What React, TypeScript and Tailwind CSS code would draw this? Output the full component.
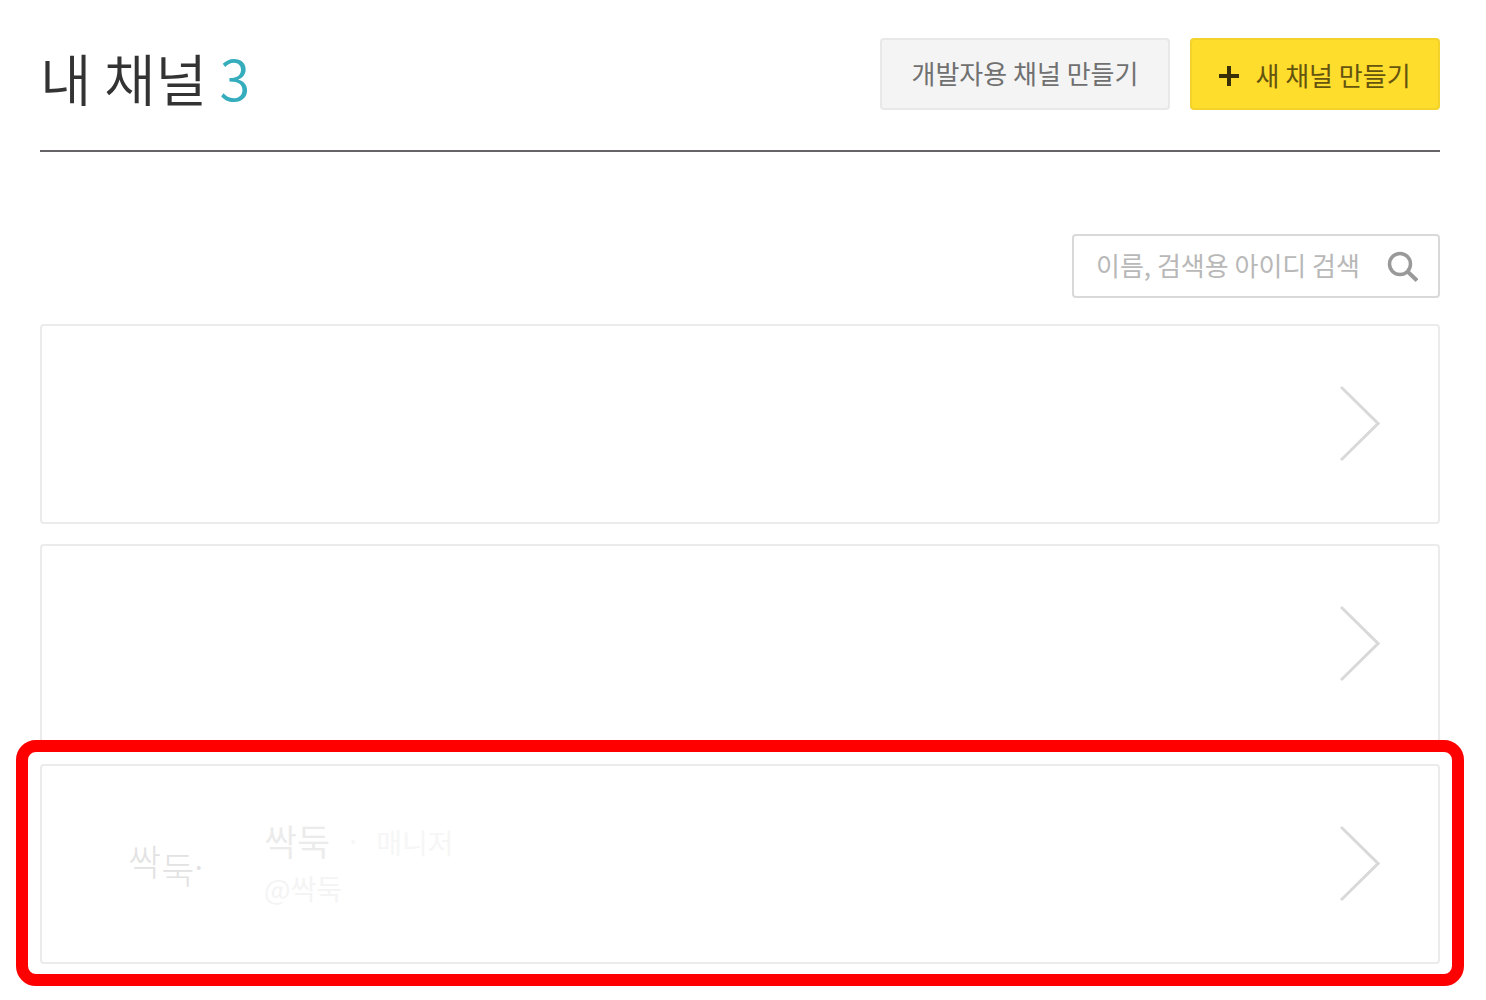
type Channel = {
  id: string
  name?: string
  role?: string
  handle?: string
  highlighted?: boolean
}

const channels: Channel[] = [
  { id: 'first' },
  { id: 'second' },
  { id: 'third', name: '싹둑', role: '매니저', handle: '@싹둑', highlighted: true },
]

function PlusIcon() {
  return (
    <svg className="mt-1 h-5 w-5 shrink-0" viewBox="0 0 20 20" aria-hidden="true">
      <path d="M8 0h4v8h8v4h-8v8H8v-8H0V8h8z" fill="#3a3008" />
    </svg>
  )
}

function SearchIcon() {
  return (
    <svg className="h-8 w-8" viewBox="0 0 32 32" fill="none" stroke="#999999" aria-hidden="true">
      <circle cx="14" cy="14" r="10.500" strokeWidth="3.500" />
      <path d="M21.500 21.500L31 30.500" strokeWidth="4" />
    </svg>
  )
}

function ChevronIcon() {
  return (
    <svg className="h-20 w-10 shrink-0" viewBox="0 0 40 80" fill="none" aria-hidden="true">
      <path d="M1 3L38 39.500L1 76" stroke="#d9d9d9" strokeWidth="3" />
    </svg>
  )
}

function ChannelCard({ channel }: { channel: Channel }) {
  return (
    <li className="relative">
      <a
        href={`#${channel.id}`}
        aria-label={channel.name ? undefined : '채널'}
        className="flex h-50 items-center justify-between rounded-sm border-2 border-[#ebebeb] bg-white pr-14.5"
      >
        {channel.name ? (
          <div className="flex items-center pl-21.5">
            <div className="flex w-34 items-start text-4xl leading-9 font-light text-[#e2e2e2]" aria-hidden="true">
              <span>싹</span>
              <span className="pt-2">둑</span>
              <span className="leading-6">.</span>
            </div>
            <div>
              <div className="flex items-center">
                <strong className="text-4xl leading-12 font-[350] text-[#ebebeb]">{channel.name}</strong>
                <span className="w-11.5 text-center text-[28px] leading-11 text-[#f7f7f7]">·</span>
                <span className="pt-1 text-[28px] leading-11 text-[#f6f6f6]">{channel.role}</span>
              </div>
              <p className="text-[28px] leading-12 text-[#f4f4f4]">{channel.handle}</p>
            </div>
          </div>
        ) : (
          <span />
        )}
        <ChevronIcon />
      </a>
      {channel.highlighted && (
        <span className="pointer-events-none absolute -inset-x-6 -top-6 -bottom-5.5 rounded-[20px] border-12 border-[#ff0000]" />
      )}
    </li>
  )
}

export default function App() {
  return (
    <main className="bg-white pt-9.5 pr-11.5 pb-9 pl-10 font-['Noto_Sans_CJK_KR',sans-serif] font-normal">
      <header className="flex items-start justify-between border-b-2 border-[#666466] pb-9.5">
        <h1 className="pt-1 text-[56px] leading-[70px] font-[350] text-[#333333]">
          내 채널 <span className="text-[#35adbd]">3</span>
        </h1>
        <div className="flex gap-5">
          <button
            type="button"
            className="h-18 w-72.5 rounded-sm border-2 border-[#e8e8e8] bg-[#f4f4f4] pb-1 text-[26px] font-normal text-[#707070]"
          >
            개발자용 채널 만들기
          </button>
          <button
            type="button"
            className="flex h-18 w-62.5 items-center justify-center gap-4 rounded-sm border-2 border-[#f2d32c] bg-[#ffdd2d] text-[26px] font-normal text-[#65540e]"
          >
            <PlusIcon />
            새 채널 만들기
          </button>
        </div>
      </header>

      <form className="mt-20.5 flex justify-end" role="search" onSubmit={(event) => event.preventDefault()}>
        <div className="flex h-16 w-92 items-center rounded-sm border-2 border-[#d9d9d9] bg-white pr-5 pl-5.5">
          <input
            type="text"
            aria-label="이름, 검색용 아이디 검색"
            placeholder="이름, 검색용 아이디 검색"
            className="min-w-0 flex-1 bg-transparent pb-1 text-[26px] font-normal text-[#333333] outline-none placeholder:text-[#b8b8b8]"
          />
          <button type="submit" aria-label="검색" className="ml-4 shrink-0">
            <SearchIcon />
          </button>
        </div>
      </form>

      <ul className="mt-6.5 flex flex-col gap-5">
        {channels.map((channel) => (
          <ChannelCard key={channel.id} channel={channel} />
        ))}
      </ul>
    </main>
  )
}
